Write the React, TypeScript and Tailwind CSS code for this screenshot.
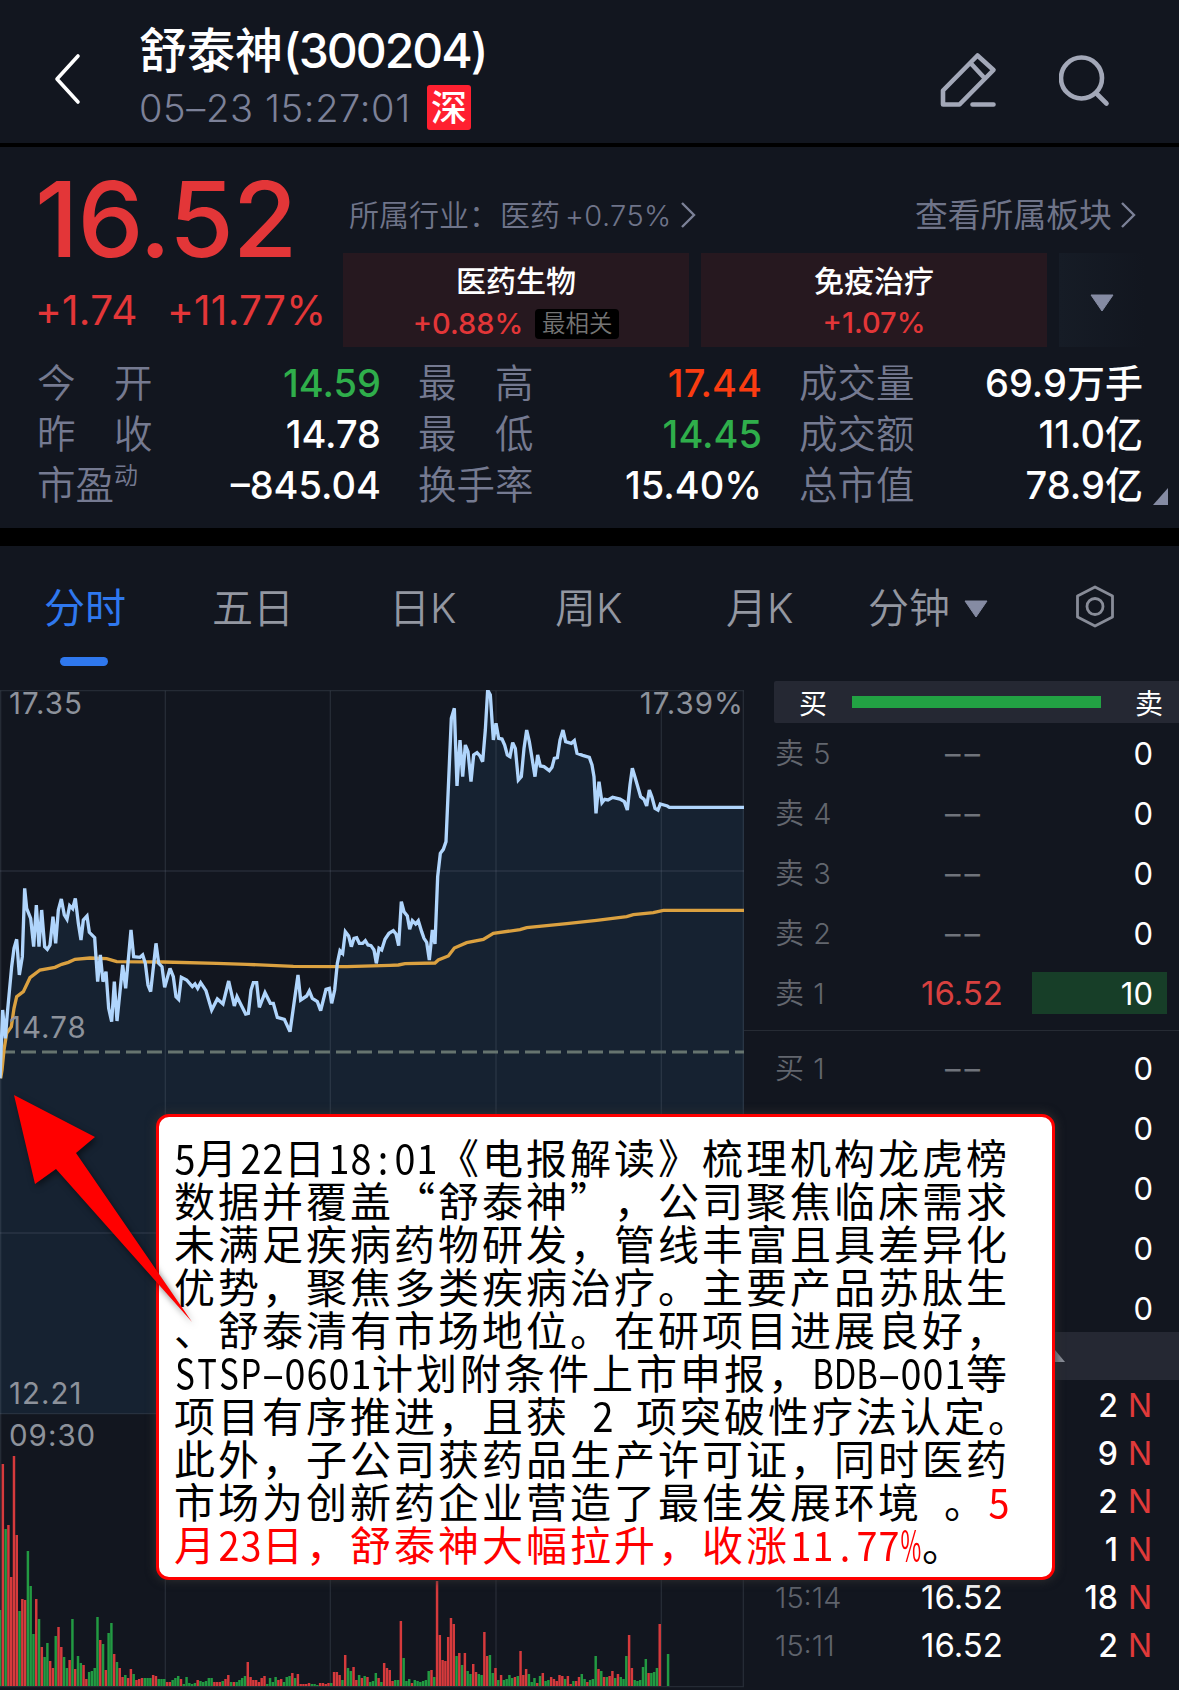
import React from 'react';

interface Stat {
  label: string;
  sup?: string;
  value: string;
  color: string;
}

interface Level {
  label: string;
  price: string;
  volume: string;
  active?: boolean;
}

interface Tick {
  time: string;
  price: string;
  volume: string;
}

const STATS: Stat[][] = [
  [
    { label: '今　开', value: '14.59', color: 'text-[#2fae4b]' },
    { label: '昨　收', value: '14.78', color: 'text-white' },
    { label: '市盈', sup: '动', value: '–845.04', color: 'text-white' },
  ],
  [
    { label: '最　高', value: '17.44', color: 'text-[#fa3c11]' },
    { label: '最　低', value: '14.45', color: 'text-[#2fae4b]' },
    { label: '换手率', value: '15.40%', color: 'text-white' },
  ],
  [
    { label: '成交量', value: '69.9万手', color: 'text-white' },
    { label: '成交额', value: '11.0亿', color: 'text-white' },
    { label: '总市值', value: '78.9亿', color: 'text-white' },
  ],
];

const TABS = [
  { label: '五日', width: 'w-[177px]' },
  { label: '日K', width: 'w-[166px]' },
  { label: '周K', width: 'w-[171px]' },
  { label: '月K', width: 'w-[142px]' },
];

const SELL: Level[] = [
  { label: '卖 5', price: '––', volume: '0' },
  { label: '卖 4', price: '––', volume: '0' },
  { label: '卖 3', price: '––', volume: '0' },
  { label: '卖 2', price: '––', volume: '0' },
  { label: '卖 1', price: '16.52', volume: '10', active: true },
];

const BUY: Level[] = [
  { label: '买 1', price: '––', volume: '0' },
  { label: '', price: '', volume: '0' },
  { label: '', price: '', volume: '0' },
  { label: '', price: '', volume: '0' },
  { label: '', price: '', volume: '0' },
];

const TICKS: Tick[] = [
  { time: '', price: '', volume: '2' },
  { time: '', price: '', volume: '9' },
  { time: '', price: '', volume: '2' },
  { time: '', price: '', volume: '1' },
  { time: '15:14', price: '16.52', volume: '18' },
  { time: '15:11', price: '16.52', volume: '2' },
];

// Chart units are a third of a pixel
const PRICE_LINE =
  '0,1195 8,990 16,1075 22,1000 35,860 42,805 50,778 58,885 67,830 74,625 80,685 92,715 101,800 109,675 117,800 125,690 134,800 142,808 150,795 159,710 167,790 175,690 184,657 193,705 201,718 209,677 218,686 226,655 235,730 243,780 250,720 261,708 268,757 284,773 293,905 301,825 309,905 318,875 326,985 335,1025 343,905 351,1023 368,855 377,925 393,750 401,830 420,832 428,825 436,850 444,915 452,935 468,790 476,850 486,860 494,922 510,865 520,890 528,950 536,958 544,892 560,900 577,920 585,912 593,925 602,908 618,932 635,990 652,957 669,972 686,903 703,978 711,950 720,968 737,1002 745,1000 753,930 760,908 770,908 778,982 795,938 811,970 820,970 832,1012 853,1018 870,1055 894,885 902,960 920,948 928,933 937,955 952,965 962,992 978,928 988,925 995,970 1004,930 1012,850 1020,812 1028,820 1036,755 1046,768 1054,800 1062,775 1070,773 1078,790 1088,790 1096,782 1104,795 1113,797 1122,810 1129,850 1137,805 1145,810 1155,778 1167,760 1180,752 1188,762 1196,797 ' +
  '1204,665 1212,695 1222,708 1229,748 1237,722 1247,732 1255,722 1265,755 1272,775 1280,787 1288,840 1297,750 1305,792 1313,590 1321,520 1330,508 1338,485 1346,300 1354,115 1363,85 1371,318 1380,180 1388,290 1396,195 1404,215 1413,305 1421,225 1431,218 1440,228 1448,245 1456,150 1463,30 1471,45 1480,180 1488,130 1496,175 1506,177 1514,195 1522,225 1530,230 1538,188 1546,205 1555,300 1564,290 1572,205 1580,150 1588,185 1597,240 1605,290 1613,225 1621,258 1632,260 1648,272 1656,262 1663,235 1672,233 1680,180 1689,150 1697,185 1714,190 1723,182 1731,220 1748,226 1768,232 1776,255 1782,290 1788,400 1797,305 1806,368 1814,358 1824,360 1838,352 1860,357 1873,365 1882,390 1890,315 1897,265 1906,295 1922,350 1932,358 1940,378 1948,330 1956,352 1965,385 1974,390 1981,372 2002,378 2008,382 2232,382';

const AVG_LINE =
  '2,1195 6,1170 12,1110 20,1060 34,1040 42,985 50,950 70,935 90,893 120,870 165,862 185,853 205,847 225,838 270,834 320,836 350,845 490,846 650,850 740,853 880,859 1040,860 1170,856 1195,855 1215,851 1305,849 1315,840 1345,828 1363,804 1400,788 1450,778 1480,760 1560,749 1580,743 1700,731 1790,721 1880,710 1900,704 1960,698 1990,691 2232,691';

// One entry per minute, negative = price went down
const VOLUMES = [
  -76, 222, -157, 161, 109, 230, 151, -75, 87, 86, -135, -100, -52, 87, -67, 39, -29, -43, 25, 18,
  -50, 59, 39, -29, -18, 26, -67, 17, -30, -23, 21, 7, -14, -15, -18, -69, 46, -42, 16, -53,
  -63, 32, -24, 18, 9, -11, 8, 17, -12, 6, 7, 8, -8, -8, -8, 11, 10, -7, -7, -7,
  4, 4, -6, -8, -10, 7, -2, -9, -3, -2, -3, 6, -5, -4, -5, -8, -8, 4, 4, 4,
  -5, 7, 11, -4, 4, -4, -6, -8, -10, 24, 9, 6, 6, 4, 8, 10, -2, -8, -4, -9,
  6, 7, -4, -9, -10, 13, -8, 12, 2, 2, 2, 3, -2, -2, -1, 3, 3, 2, 3, -3,
  14, 14, 11, -6, 31, -18, -15, 19, 6, -11, 8, -10, 9, -4, -5, -13, 8, -4, 23, 18,
  16, 5, -6, -6, 65, -28, -5, -7, 3, -6, -5, -4, -5, -6, -15, 16, -9, 105, 51, 26,
  25, 49, 68, 62, -30, 33, -21, 33, -15, -12, 22, 14, -12, -11, 54, 30, -31, -13, 18, -6,
  11, -6, -7, -11, -8, 9, -10, 35, 11, 17, -12, -4, -8, 3, -10, 13, -5, -6, 9, 7,
  5, 11, 10, -7, 10, 2, -5, 5, 9, -12, -7, 4, -6, -7, -30, 17, -15, 9, -9, 10,
  15, -8, 12, -9, -7, -30, 51, 18, -6, -5, -6, -19, -27, 13, -13, -14, -18, 62, 0, 0,
  -32,
];

const CALLOUT_LINES = [
  ['5', '月', '22', '日', '18:01', '《电报解读》梳理机构龙虎榜'],
  ['数据并覆盖“舒泰神”，公司聚焦临床需求'],
  ['未满足疾病药物研发，管线丰富且具差异化'],
  ['优势，聚焦多类疾病治疗。主要产品苏肽生'],
  ['、舒泰清有市场地位。在研项目进展良好，'],
  ['STSP-0601', '计划附条件上市申报，', 'BDB-001', '等'],
  ['项目有序推进，且获', ' 2 ', '项突破性疗法认定。'],
  ['此外，子公司获药品生产许可证，同时医药'],
];

const Triangle: React.FC<{ className?: string }> = ({ className }) => (
  <svg className={className} width="24" height="18" viewBox="0 0 24 18">
    <path d="M1 1h22L12 17z" fill="#858ba3" stroke="#858ba3" strokeLinejoin="round" />
  </svg>
);

const Chevron: React.FC<{ className?: string }> = ({ className }) => (
  <svg className={className} width="16" height="28" viewBox="0 0 16 28" fill="none">
    <path d="M2 2l12 12L2 26" stroke="#7b8197" strokeWidth="2.4" />
  </svg>
);

// Narrows or widens a glyph so that it fills its half-width cell
const cellScale = (c: string) => {
  if (c === '%') return 'scale-x-[0.55]';
  if (c === '-') return 'scale-x-[1.7]';
  if (/[A-Z]/.test(c)) return 'scale-x-[0.8]';
  return 'scale-x-[0.92]';
};

// Half-width characters sit on a 22px cell, full-width ones on 44px
const Run: React.FC<{ text: string }> = ({ text }) => {
  const half = /^[\x20-\x7e]+$/.test(text);
  if (!half) return <span>{text}</span>;
  return (
    <span className="inline-flex tracking-normal whitespace-pre">
      {text.split('').map((c, i) => (
        <span key={i} className={`flex w-[22px] justify-center ${cellScale(c)}`}>{c}</span>
      ))}
    </span>
  );
};

const LevelRow: React.FC<{ level: Level }> = ({ level }) => (
  <div className="grid h-[60px] grid-cols-[117px_140px_135px] items-center pl-[31px]">
    <span className="text-[29px] font-[350] tracking-[0.5px] text-[#62666e]">{level.label}</span>
    <span className={`text-center ${level.active ? 'text-[33px] text-[#d8403f]' : 'pl-[5px] pt-px text-[31px] tracking-[4px] text-[#6f737b]'}`}>{level.price}</span>
    <span className={`flex h-[42px] items-center justify-end pr-[14px] text-[31px] text-white ${level.active ? 'bg-[#173e28]' : ''}`}>{level.volume}</span>
  </div>
);

const Chart: React.FC = () => (
  <div className="relative h-[1000px] w-[744px] text-[29.500px] tracking-[1px] text-[#8d929b]">
    <svg className="block" width="744" height="1000" viewBox="0 30 2232 3000" fill="none">
      <polygon points={`0,2201 ${PRICE_LINE} 2232,2201`} fill="#162231" />
      <g stroke="#8b95a6" strokeOpacity="0.17" strokeWidth="4">
        <path d="M0 32H2232M0 573H2232M0 1659H2232M0 2201H2232M0 3020H2232" />
        <path d="M2 32V3018M496 32V3018M991 32V3018M1488 32V3018M1984 32V3018M2230 32V3018" />
      </g>
      <path d="M0 1116H2232" stroke="#66746f" strokeWidth="9" strokeDasharray="45 18" />
      <polyline points={AVG_LINE} stroke="#dba140" strokeWidth="10" />
      <polyline points={PRICE_LINE} stroke="#b0d5fc" strokeWidth="10" strokeMiterlimit="3" />
      {VOLUMES.map((v, i) => (
        <rect
          key={i}
          x={i * 8.35 - 3.5}
          y={3018 - Math.abs(v) * 3}
          width="7.4"
          height={Math.abs(v) * 3}
          fill={v < 0 ? '#229a42' : '#d63a3c'}
        />
      ))}
    </svg>
    <span className="absolute top-[-1px] left-[9px]">17.35</span>
    <span className="absolute top-[-1px] right-0">17.39%</span>
    <span className="absolute top-[323px] left-[9px]">14.78</span>
    <span className="absolute top-[689px] left-[9px]">12.21</span>
    <span className="absolute top-[731px] left-[9px]">09:30</span>
  </div>
);

const Header: React.FC = () => (
  <header className="flex h-[147px] border-b-4 border-black">
    <svg className="mt-[53px] ml-[53px]" width="28" height="52" viewBox="0 0 28 52" fill="none">
      <path d="M25 3L4 26l21 23" stroke="white" strokeWidth="3.6" strokeLinecap="round" strokeLinejoin="round" />
    </svg>
    <div className="ml-[58px] flex-1 pt-[27px]">
      <h1 className="text-[48px] font-medium text-white">舒泰神<span className="tracking-[-2px]">(300204)</span></h1>
      <div className="mt-[10px] flex items-center">
        <span className="w-[288px] text-[38px] font-[350] tracking-[0.65px] whitespace-nowrap text-[#7c8198]">05–23 15:27:01</span>
        <span className="flex h-[45px] w-[44px] items-center justify-center rounded-[3px] bg-[#ff2030] text-[36px] font-medium text-white">深</span>
      </div>
    </div>
    <svg className="mt-[49px] mr-[60px]" width="60" height="60" viewBox="0 0 60 60" fill="none" stroke="#a3a8b8" strokeWidth="4.600" strokeLinecap="round" strokeLinejoin="round">
      <path d="M38.500 6.500L54.500 21 20.500 55.500H4V41.500zM31.500 14L44.500 28M33.500 55.500H54.500" />
    </svg>
    <svg className="mt-[50px] mr-[64px]" width="56" height="60" viewBox="0 0 56 60" fill="none" stroke="#a3a8b8" strokeWidth="4.600" strokeLinecap="round">
      <circle cx="22.500" cy="28" r="20.500" />
      <path d="M37 43L47.500 53.500" />
    </svg>
  </header>
);

const Quote: React.FC = () => (
  <section className="h-[381px]">
    <div className="flex h-[210px] pl-[35px]">
      <div className="w-[308px] pt-[19px] text-[#e33638]">
        <div className="text-[105px] font-medium tracking-[-1px]">16.52</div>
        <div className="mt-[20px] flex text-[40.500px] font-normal tracking-[0.3px]">
          <span className="w-[132px]">+1.74</span>
          <span>+11.77%</span>
        </div>
      </div>
      <div className="flex-1 pt-[52px]">
        <div className="flex h-8 items-center text-[30px] text-[#6f7489]">
          <span className="w-[157px] pl-[6px] font-[350]">所属行业：</span>
          <span className="w-[65px] font-[350]">医药</span>
          <span className="w-[115px] text-[29px] font-[350] tracking-[0.4px]">+0.75%</span>
          <Chevron />
          <span className="ml-auto w-[205px] text-[32.800px]">查看所属板块</span>
          <Chevron className="mr-[43px]" />
        </div>
        <div className="mt-[22px] flex h-[94px] gap-[12px] text-[30px] font-medium text-white">
          <div className="flex w-[346px] flex-col items-center bg-[#26181f] pt-[13px]">
            <span>医药生物</span>
            <div className="mt-[12px] flex h-[30px] items-center gap-[12px]">
              <span className="text-[29px] text-[#e33638]">+0.88%</span>
              <span className="mt-[2px] flex h-[30px] w-[84px] items-center justify-center rounded-[4px] bg-black text-[23.500px] font-[350] text-[#747474]">最相关</span>
            </div>
          </div>
          <div className="flex w-[346px] flex-col items-center bg-[#26181f] pt-[13px]">
            <span>免疫治疗</span>
            <span className="mt-[12px] text-[29px] text-[#e33638]">+1.07%</span>
          </div>
          <div className="flex w-[86px] items-center justify-center bg-gradient-to-r from-[#161c26] to-[#12161f]">
            <Triangle className="mt-[6px]" />
          </div>
        </div>
      </div>
    </div>
    <div className="flex gap-[38px] pl-[37px] text-[38.500px]">
      {STATS.map((column, i) => (
        <div key={i} className="relative w-[343px]">
          {column.map(s => (
            <div key={s.label} className="flex h-[51px] items-center justify-between">
              <span className="flex pt-[2px] font-[350] text-[#757a91]">
                {s.label}
                {s.sup && <sup className="-top-[2px] text-[24px] leading-none">{s.sup}</sup>}
              </span>
              <span className={`-mr-px text-[38px] font-medium ${s.color}`}>{s.value}</span>
            </div>
          ))}
        </div>
      ))}
      <svg className="mt-[131px] -ml-[27px]" width="15" height="17" viewBox="0 0 15 17">
        <path d="M15 0V17H0z" fill="#858ba3" />
      </svg>
    </div>
  </section>
);

const Tabs: React.FC = () => (
  <nav className="flex h-[117px] pt-[42px] pl-[44px] text-[41px] font-[350] text-[#9397a1]">
    <div className="w-[168px]">
      <div className="font-normal text-[#2f78ee]">分时</div>
      <div className="mt-[28px] ml-[16px] h-[9px] w-[48px] rounded-full bg-[#2f78ee]" />
    </div>
    {TABS.map(tab => (
      <div key={tab.label} className={tab.width}>{tab.label}</div>
    ))}
    <div className="flex">
      分钟
      <Triangle className="mt-[12px] ml-[14px]" />
    </div>
    <svg className="-mt-[4px] ml-[86px]" width="42" height="44" viewBox="0 0 42 44" fill="none" stroke="#888c98" strokeWidth="2.800" strokeLinejoin="round">
      <path d="M21 3L38.500 12V33L21 42 3.500 33V12z" />
      <circle cx="21" cy="22.500" r="8" />
    </svg>
  </nav>
);

const OrderBook: React.FC = () => (
  <aside className="w-[435px]">
    <div className="ml-[30px] flex h-[42px] items-center rounded-l-[2px] bg-[#252833] text-[28px] text-white">
      <span className="w-[78px] pt-[3px] pl-[25px]">买</span>
      <span className="h-[12px] w-[249px] bg-[#22a243]" />
      <span className="ml-[34px] pt-[3px]">卖</span>
    </div>
    <div>
      {SELL.map(level => <LevelRow key={level.label} level={level} />)}
    </div>
    <div className="mt-[7px] h-[9px] border-t border-[#262b34]" />
    <div className="-mt-px">
      {BUY.map((level, i) => <LevelRow key={i} level={level} />)}
    </div>
    <div className="-mt-[6px] ml-[30px] flex h-[48px] items-center bg-[#252833] pl-[270px]">
      <svg width="22" height="13" viewBox="0 0 22 13"><path d="M11 0L21 12H1z" fill="#8c909b" /></svg>
    </div>
    <div className="pt-[2px]">
      {TICKS.map((tick, i) => (
        <div key={i} className="grid h-[48px] grid-cols-[117px_140px_85px_34px] items-center pl-[31px] text-white">
          <span className="-mt-[2px] text-[29px] font-[350] text-[#5f636c]">{tick.time}</span>
          <span className="-mt-px text-center text-[33px]">{tick.price}</span>
          <span className="-mr-px text-right text-[32px] font-medium">{tick.volume}</span>
          <span className="-mr-px text-right text-[32px] text-[#e03a3a]">N</span>
        </div>
      ))}
    </div>
  </aside>
);

const Callout: React.FC = () => (
  <div className="absolute top-[1114px] left-[156px] h-[466px] w-[899px] rounded-[13px] border-[3px] border-[#ff0000] bg-white pt-[18px] pl-[15px] font-['Noto_Sans_CJK_SC','Liberation_Sans',sans-serif] text-[41px] leading-[43px] tracking-[3px] whitespace-nowrap text-black shadow-[0_0_8px_2px_rgba(50,50,50,0.7)] [text-spacing-trim:space-all]">
    {CALLOUT_LINES.map((line, i) => (
      <div key={i} className="flex h-[43px]">
        {line.map((text, j) => <Run key={j} text={text} />)}
      </div>
    ))}
    <div className="flex h-[43px]">
      <Run text="市场为创新药企业营造了最佳发展环境" />
      <Run text=" " />
      <Run text="。" />
      <span className="flex text-[#ff0000]"><Run text="5" /></span>
    </div>
    <div className="flex h-[43px]">
      <span className="flex text-[#ff0000]">
        <Run text="月" />
        <Run text="23" />
        <Run text="日，舒泰神大幅拉升，收涨" />
        <Run text="11.77%" />
      </span>
      <Run text="。" />
    </div>
  </div>
);

export default function App() {
  return (
    <div className="relative h-[1690px] w-[1179px] overflow-hidden bg-[#12161f] font-['Inter','Noto_Sans_CJK_SC',sans-serif] leading-none">
      <Header />
      <Quote />
      <div className="h-[18px] bg-black" />
      <Tabs />
      <main className="mt-[18px] flex">
        <div className="pt-[9px]"><Chart /></div>
        <OrderBook />
      </main>
      <Callout />
      <svg className="absolute top-[1090px] left-0 drop-shadow-[2px_3px_3px_rgba(0,0,0,0.5)]" width="200" height="240" viewBox="0 1090 200 240">
        <path d="M14 1095L95 1137 76 1153 192 1322 56 1169 35 1184z" fill="#ff0000" />
      </svg>
    </div>
  );
}
